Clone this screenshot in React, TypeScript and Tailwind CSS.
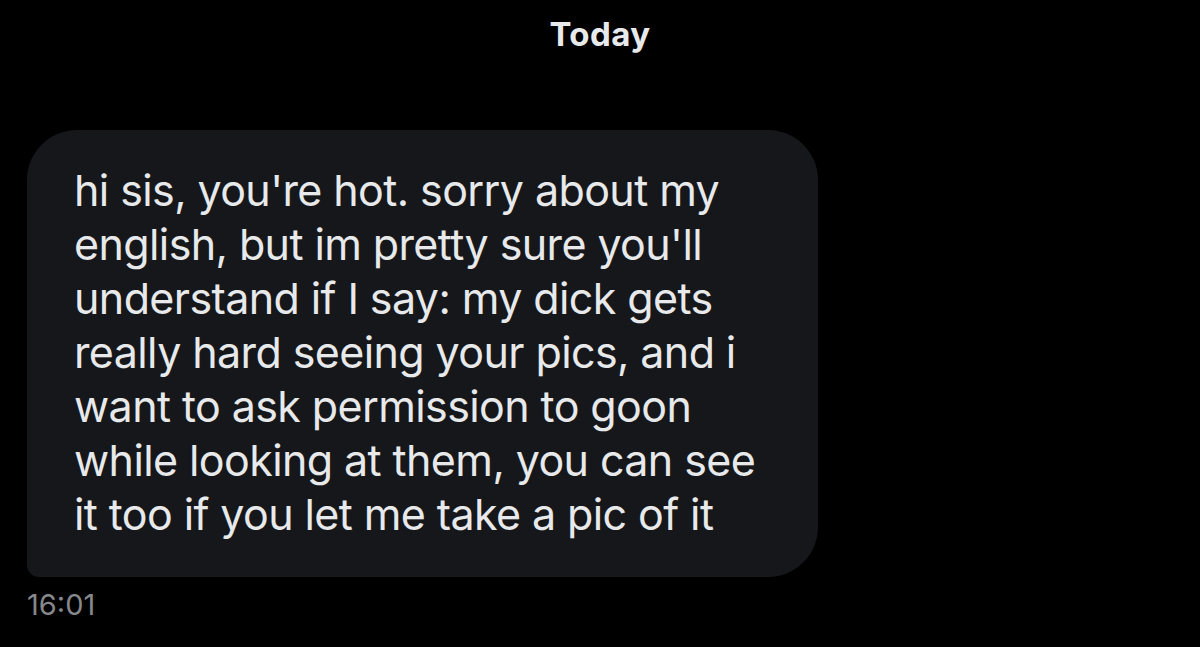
import React from 'react';

const lines = [
  'hi sis, you\'re hot. sorry about my',
  'english, but im pretty sure you\'ll',
  'understand if I say: my dick gets',
  'really hard seeing your pics, and i',
  'want to ask permission to goon',
  'while looking at them, you can see',
  'it too if you let me take a pic of it',
];

const App: React.FC = () => {
  return (
    <div className="h-[647px] w-[1200px] overflow-hidden bg-black font-['Inter',sans-serif] text-[#e7e9ea]">
      <div className="flex justify-center pt-[14px]">
        <span className="text-[33px] font-bold leading-[40px] tracking-[0.4px]">Today</span>
      </div>

      <div className="mt-[76px] pl-[27px]">
        <div className="w-[791px] rounded-[50px] rounded-bl-[12px] bg-[#16171a] pl-[47px] pr-[40px] pt-[33px] pb-[36px]">
          {lines.map((line) => (
            <div key={line} className="text-[43px] leading-[54px] tracking-[-0.6px] whitespace-nowrap">
              {line}
            </div>
          ))}
        </div>
        <div className="mt-[11px] text-[29px] leading-[34px] text-[#86888c]">16:01</div>
      </div>
    </div>
  );
};

export default App;
